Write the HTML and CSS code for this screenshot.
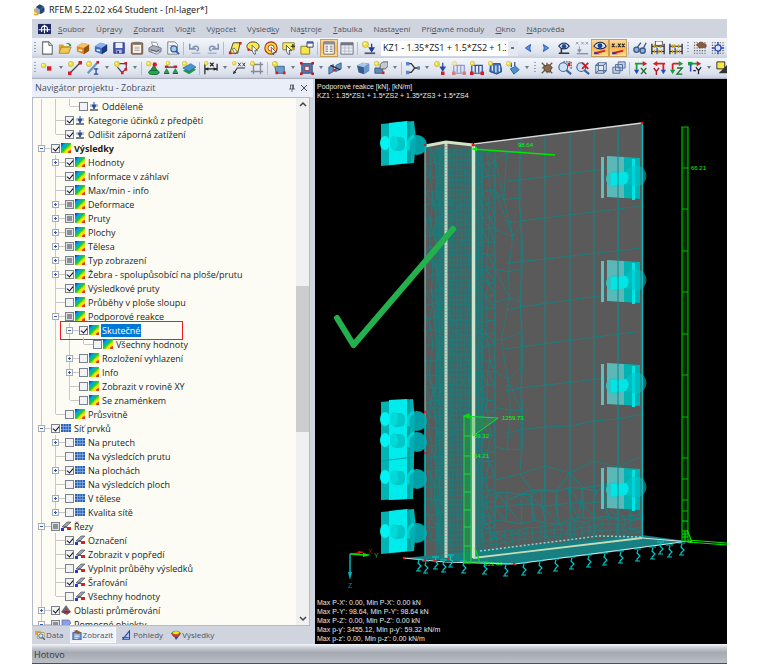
FILE: index.html
```html
<!DOCTYPE html>
<html lang="cs">
<head>
<meta charset="utf-8">
<title>RFEM 5.22.02 x64 Student - [nl-lager*]</title>
<link rel="stylesheet" href="styles.css">
</head>
<body>
<svg class="defs" aria-hidden="true">
  <defs>
    <linearGradient id="rainbow" x1="0" y1="0" x2="1" y2="1">
      <stop offset="0" stop-color="#0a2cc8"/><stop offset=".28" stop-color="#00a8e8"/><stop offset=".48" stop-color="#12c83c"/><stop offset=".68" stop-color="#f4e800"/><stop offset=".88" stop-color="#f02800"/>
    </linearGradient>
    <symbol id="bulb" viewBox="0 0 16 16"><circle cx="4.500" cy="4.500" r="4" fill="#f2e23c" stroke="#b09a1c" stroke-width=".7"/><circle cx="3.500" cy="3.500" r="1.400" fill="#fffbd0"/></symbol>
    <symbol id="i-app" viewBox="0 0 16 16"><circle cx="9.500" cy="8" r="6" fill="#5b86ba"/><path d="M4 5l5-4 5 3-5 4zM9 8l6-3v6l-6 3z" fill="#27466f"/><path d="M4 5l5 3v6L4 11z" fill="#8fb1d8"/><path d="M7 8H2.500v3H6v3.500H1" fill="none" stroke="#e0a818" stroke-width="2"/></symbol>
    <symbol id="i-frame" viewBox="0 0 18 16"><path d="M0 1h18v14H0z" fill="#1d2a66"/><path d="M1 9h16M9 2v12M5 6l4-3 4 3M5 6v6M13 6v6" stroke="#fff" stroke-width="1.500" fill="none"/></symbol>
    <symbol id="i-new" viewBox="0 0 16 16"><path d="M3 1h7l4 4v10H3z" fill="#fff" stroke="#666" stroke-width="1.200"/><path d="M10 1v4h4" fill="#ddd" stroke="#666"/></symbol>
    <symbol id="i-open" viewBox="0 0 16 16"><path d="M1 14V4h5l1 2h6v8z" fill="#d9a52c"/><path d="M1 14l3-7h11l-3 7z" fill="#f0c858" stroke="#9b7418" stroke-width=".8"/><path d="M9 3c2-2 4-1 5 1l1-1v3h-3l1-1c-1-2-2-2-4-2z" fill="#3c8f3c"/></symbol>
    <symbol id="i-boxo" viewBox="0 0 16 16"><path d="M1 6l6-4 8 2v7l-6 4-8-3z" fill="#d98a24"/><path d="M1 6l6-4 8 2-6 4z" fill="#f4c06a"/><path d="M9 8l6-4v7l-6 4z" fill="#8f5410"/><path d="M3 9l4 1v2l-4-1z" fill="#fff0c8"/></symbol>
    <symbol id="i-boxb" viewBox="0 0 16 16"><path d="M1 6l6-4 8 2v7l-6 4-8-3z" fill="#3d6fc0"/><path d="M1 6l6-4 8 2-6 4z" fill="#8bb2ec"/><path d="M9 8l6-4v7l-6 4z" fill="#1c3a7c"/><path d="M3 9l4 1v2l-4-1z" fill="#e0ecff"/></symbol>
    <symbol id="i-save" viewBox="0 0 16 16"><path d="M2 2h12v12H2z" fill="#4b57b4" stroke="#26307c"/><path d="M4 2h8v6H4z" fill="#eceffa"/><path d="M5 10h6v4H5z" fill="#b8c0e0"/><path d="M6 11h2v3H6z" fill="#26307c"/></symbol>
    <symbol id="i-clip" viewBox="0 0 16 16"><rect x="1.500" y="2" width="13" height="13" rx="1" fill="#a87e5c" stroke="#6c4c34"/><path d="M3.500 4.500h9v9h-9z" fill="#fff"/><path d="M5 7h6M5 9h6M5 11h6" stroke="#999"/><path d="M5 1h6v3H5z" fill="#777"/></symbol>
    <symbol id="i-print" viewBox="0 0 16 16"><path d="M4 1l6 1 2 5-6 1z" fill="#fff" stroke="#777" stroke-width=".8"/><path d="M1 8l5-3 9 3v4l-5 3-9-3z" fill="#a8afbc" stroke="#565d6c" stroke-width=".8"/><path d="M3 10l7 2 3-2" fill="none" stroke="#444"/><path d="M5 12l5 2 2-1" stroke="#fff" fill="none"/></symbol>
    <symbol id="i-prev" viewBox="0 0 16 16"><path d="M2 1h8l3 3v11H2z" fill="#f4f6fa" stroke="#777"/><path d="M4 5h5M4 8h3" stroke="#aaa"/><circle cx="9" cy="9" r="3.500" fill="#a8ccf0" stroke="#33629c" stroke-width="1.300"/><path d="M11.500 11.500L15 15" stroke="#33629c" stroke-width="2"/></symbol>
    <symbol id="i-undo" viewBox="0 0 16 16"><path d="M2 3v6h6L6 7c3-2 6-1 6 2 0 1-1 2-2 2.500" fill="none" stroke="#8093b2" stroke-width="1.800"/><path d="M4 14h10" stroke="#a4b0c4" stroke-width="1.500"/></symbol>
    <symbol id="i-redo" viewBox="0 0 16 16"><path d="M14 3v6H8l2-2C7 5 4 6 4 9c0 1 1 2 2 2.500" fill="none" stroke="#8093b2" stroke-width="1.800"/><path d="M2 14h10" stroke="#a4b0c4" stroke-width="1.500"/></symbol>
    <symbol id="i-para" viewBox="0 0 16 16"><path d="M6 2h8l-3 12H2z" fill="#f8ea58" stroke="#40381c"/><path d="M7 8l4 5-2 0-1 2-3-6z" fill="#fff" stroke="#222" stroke-width=".7"/><path d="M12.500 1h3v3h-3zM1 12h3v3H1z" fill="#d82020"/></symbol>
    <symbol id="i-lasso" viewBox="0 0 16 16"><ellipse cx="8" cy="6" rx="7" ry="5" fill="#f8ea58" stroke="#40381c"/><path d="M7 5l6 6-3 0 1 4-2 0-2-4z" fill="#fff" stroke="#222" stroke-width=".7"/><circle cx="3" cy="10" r="1.500" fill="#d82020"/></symbol>
    <symbol id="i-target" viewBox="0 0 16 16"><circle cx="8" cy="8" r="7" fill="#f6dc38" stroke="#a83418" stroke-width="1.300"/><circle cx="8" cy="8" r="3.500" fill="#fff" stroke="#d82020"/><path d="M8 7l6 6-3 0 0 3-2-3z" fill="#fff" stroke="#222" stroke-width=".7"/></symbol>
    <symbol id="i-selplus" viewBox="0 0 16 16"><path d="M1 2h13v8H1z" fill="#f8ee70" stroke="#8a7c28"/><path d="M10 6h5M12.500 3.500v5" stroke="#222" stroke-width="1.300"/><path d="M5 5l6 6-3 0 1 4-2 0-2-3z" fill="#fff" stroke="#222" stroke-width=".8"/></symbol>
    <symbol id="i-selwin" viewBox="0 0 16 16"><path d="M1 6h10v9H1z" fill="#f6e64c" stroke="#8a7c28"/><path d="M8 1h7v6H8z" fill="#fff" stroke="#334"/><path d="M8 1h7v2H8z" fill="#3c60b0"/></symbol>
    <symbol id="i-sheet" viewBox="0 0 16 16"><path d="M2 1h12v14H2z" fill="#f8f8f8" stroke="#666"/><path d="M2 1h12v3H2z" fill="#8c8c94"/><path d="M4 6h3M9 6h3M4 8h3M9 8h3M4 10h3M9 10h3M4 12h3M9 12h3" stroke="#888" stroke-width="1.200"/></symbol>
    <symbol id="i-table" viewBox="0 0 16 16"><path d="M1 2h14v13H1z" fill="#eef0f4" stroke="#667"/><path d="M1 2h14v3H1z" fill="#707888"/><path d="M5.500 5v10M10 5v10M1 8h14M1 11.500h14" stroke="#b4bac6"/></symbol>
    <symbol id="i-load" viewBox="0 0 16 16"><use href="#bulb" width="14" height="14"/><path d="M3 14h12" stroke="#556" stroke-width="2"/><path d="M11 3v7M8.500 8l2.500 4 2.500-4z" stroke="#2040a0" fill="#2040a0" stroke-width="1.500"/></symbol>
    <symbol id="i-left" viewBox="0 0 16 16"><path d="M11 4L5 8l6 4-1-4z" fill="#5a96e8" stroke="#2050b0"/></symbol>
    <symbol id="i-right" viewBox="0 0 16 16"><path d="M5 4l6 4-6 4 1-4z" fill="#5a96e8" stroke="#2050b0"/></symbol>
    <symbol id="i-eye" viewBox="0 0 16 16"><path d="M2 6c3-5 9-5 12 0-3 4-9 4-12 0z" fill="#dbe8f8" stroke="#182c58" stroke-width="1.300"/><circle cx="8" cy="6" r="2.600" fill="#234c98"/><path d="M5 8v6M2 14h12" stroke="#334" stroke-width="1.800"/></symbol>
    <symbol id="i-xload" viewBox="0 0 16 16"><path d="M1 1l3 3M4 1L1 4M7 1l3 3M10 1L7 4M12 1l3 3M15 1l-3 3" stroke="#8c94a4"/><path d="M5 6v5M3 10l2 3 2-3z" stroke="#8c94a4" fill="#8c94a4"/><path d="M2 14.500h13" stroke="#8c94a4" stroke-width="1.600"/></symbol>
    <symbol id="i-eyer" viewBox="0 0 16 16"><path d="M1 6c4-6 11-6 14 0-3 4-10 4-14 0z" fill="#dbe8f8" stroke="#182c58" stroke-width="1.200"/><circle cx="8" cy="5.500" r="2.800" fill="#1c428c"/><path d="M2 14l12-3" stroke="#e02020" stroke-width="2.200"/><path d="M1 15h7l-6-3z" fill="#2038d0"/></symbol>
    <symbol id="i-xr" viewBox="0 0 16 16"><path d="M1 3l3 4M4 3L1 7M8 3l3 4M11 3L8 7M12.500 3l3 4M15.500 3l-3 4M6 6v1" stroke="#222" stroke-width="1.200"/><path d="M2 14l12-3" stroke="#e02020" stroke-width="2.200"/><path d="M1 15h7l-6-3z" fill="#2038d0"/></symbol>
    <symbol id="i-glass" viewBox="0 0 16 16"><circle cx="4" cy="10" r="3" fill="#8eaedc" stroke="#3c5888" stroke-width="1.500"/><circle cx="11" cy="11" r="3" fill="#8eaedc" stroke="#3c5888" stroke-width="1.500"/><path d="M5 7l4-5M12 8l3-6" stroke="#3c5888" stroke-width="1.500"/></symbol>
    <symbol id="i-abac" viewBox="0 0 16 16"><path d="M1 3v12M15 3v12M1 6h14M1 12h14" stroke="#223" stroke-width="1.400"/><path d="M4 4v4M6.500 4v4M11 4v4M4 10v4M9 10v4M12 10v4" stroke="#c8a020" stroke-width="1.800"/><path d="M7 8v7" stroke="#3058b8" stroke-width="1.500"/></symbol>
    <symbol id="i-abac2" viewBox="0 0 16 16"><use href="#i-abac" width="16" height="16"/><path d="M5 0h8v5H5z" fill="#fff" stroke="#445"/></symbol>
    <symbol id="i-grid" viewBox="0 0 16 16"><path d="M1 2h14M1 5h14M1 8h14M1 11h14M1 14h14" stroke="#666" stroke-width="1.200" stroke-dasharray="1.500 1.500"/></symbol>
    <symbol id="i-hand" viewBox="0 0 16 16"><use href="#i-grid" width="16" height="16"/><path d="M4 4l5-3 6 3v3l-8 1z" fill="#8c5c3c" stroke="#4c3020" stroke-width=".6"/></symbol>
    <symbol id="i-snap" viewBox="0 0 16 16"><use href="#i-grid" width="16" height="16"/><path d="M8 1v14M1 8h14" stroke="#2848b8" stroke-width="1.500"/><circle cx="8" cy="8" r="3.500" fill="#dce8ff" stroke="#2848b8" stroke-width="1.400"/></symbol>
    <symbol id="i-node" viewBox="0 0 16 16"><use href="#bulb" x="1" y="2" width="11" height="11"/><path d="M8 6h5v5H8z" fill="#d81c24"/></symbol>
    <symbol id="i-line" viewBox="0 0 16 16"><path d="M2 14L14 2" stroke="#444" stroke-width="1.500"/><path d="M0 12h4v4H0zM12 0h4v4h-4z" fill="#d81c24"/><use href="#bulb" width="12" height="12"/></symbol>
    <symbol id="i-beam" viewBox="0 0 16 16"><path d="M2 14L13 2" stroke="#6a94c0" stroke-width="2.500"/><path d="M12 0h3v3h-3z" fill="#d81c24"/><use href="#bulb" width="12" height="12"/><path d="M9 9h5M11.500 9v6M9 15h5" stroke="#2848a0" stroke-width="1.500"/></symbol>
    <symbol id="i-poly" viewBox="0 0 16 16"><path d="M4 3h10v6l-5 4-5-6" fill="none" stroke="#446" stroke-width="1.400"/><path d="M12 1h3v3h-3zM12 8h3v3h-3zM8 12h3v3H8z" fill="#d81c24"/><use href="#bulb" width="12" height="12"/></symbol>
    <symbol id="i-supp" viewBox="0 0 16 16"><path d="M9 5l4 6H5z" fill="#1c9c48" stroke="#0c6428"/><ellipse cx="9" cy="13" rx="6" ry="2.500" fill="#26a854" stroke="#0c6428"/><circle cx="10" cy="4" r="2.500" fill="#d81c24"/><use href="#bulb" width="11" height="11"/></symbol>
    <symbol id="i-supl" viewBox="0 0 16 16"><path d="M2 7h12" stroke="#444" stroke-width="1.500"/><path d="M3 8l3 5H0zM13 8l3 5h-6z" fill="#1c9c48"/><path d="M0 14h6M10 14h6" stroke="#0c6428" stroke-width="1.500"/><path d="M1 5h4v3H1zM11 5h4v3h-4z" fill="#d81c24"/><use href="#bulb" x="2" width="9" height="9"/></symbol>
    <symbol id="i-sups" viewBox="0 0 16 16"><path d="M1 11l9-5 6 4-8 5z" fill="#1c9c48"/><path d="M1 8l9-5 6 4-8 5z" fill="#4c94d0" stroke="#245c94" stroke-width=".7"/><use href="#bulb" width="11" height="11"/></symbol>
    <symbol id="i-dim" viewBox="0 0 16 16"><path d="M1 3v12M15 3v8M1 9h14" stroke="#222" stroke-width="1.400"/><path d="M1 9l4-2v4zM15 9l-4-2v4z" fill="#222"/><path d="M7 2l4 4M11 2L7 6" stroke="#222" stroke-width="1.300"/><use href="#bulb" width="9" height="9"/></symbol>
    <symbol id="i-dimx" viewBox="0 0 16 16"><path d="M2 14l4-6h9" fill="none" stroke="#333" stroke-width="1.300"/><path d="M7 2l3 4M10 2L7 6M12 2l3 4M15 2l-3 4" stroke="#333"/><path d="M1 15l1-4 3 2z" fill="#333"/><use href="#bulb" width="9" height="9"/></symbol>
    <symbol id="i-axes" viewBox="0 0 16 16"><path d="M4 1v14M12 1v14M1 4h14M1 12h14" stroke="#889" stroke-width="1.500"/><use href="#bulb" width="10" height="10"/></symbol>
    <symbol id="i-surf" viewBox="0 0 16 16"><path d="M3 6h11v8H5z" fill="#6c9cc8" stroke="#38618c"/><path d="M12.500 12h3v3h-3zM4 12h3v3H4z" fill="#d81c24"/><use href="#bulb" width="12" height="12"/></symbol>
    <symbol id="i-hole" viewBox="0 0 16 16"><path d="M2 3h12v11H2z" fill="#4c7cb0" stroke="#28507c"/><path d="M5.500 6h5v5h-5z" fill="#f0f4fa" stroke="#a02830"/><path d="M0 1h3v3H0zM13 1h3v3h-3zM0 13h3v3H0zM13 13h3v3h-3z" fill="#c81c24"/></symbol>
    <symbol id="i-rib" viewBox="0 0 16 16"><path d="M1 7l5-3v8l-5 3zM9 5l6-3v7l-6 3z" fill="#6494c8" stroke="#38618c"/><path d="M3 5l11 5" stroke="#223" stroke-width="1.300"/><path d="M6 9h3v3H6z" fill="#d81c24"/></symbol>
    <symbol id="i-solid" viewBox="0 0 16 16"><path d="M1 5l7-3 7 1v8l-6 4-6-2z" fill="#385c90"/><path d="M1 5l7-3 7 1-6 4z" fill="#a8c8ec"/><path d="M9 7l6-4v8l-6 4z" fill="#6c98cc"/></symbol>
    <symbol id="i-bodies" viewBox="0 0 16 16"><path d="M1 8h9v6H1z" fill="#5c8cbc" stroke="#305478"/><path d="M7 4l3-3h6v5l-3 3H7z" fill="#c4cad4" stroke="#555"/><path d="M9 12h3v3H9z" fill="#d81c24"/><use href="#bulb" width="11" height="11"/></symbol>
    <symbol id="i-branch" viewBox="0 0 16 16"><path d="M2 3h4l4 5-4 5H2M10 8h4" fill="none" stroke="#333" stroke-width="1.500"/><path d="M0 1h4v4H0zM0 11h4v4H0zM13 6h3v4h-3z" fill="#5888c8"/></symbol>
    <symbol id="i-nload" viewBox="0 0 16 16"><path d="M10 2v6M7.500 7l2.500 4 2.500-4z" stroke="#2848a8" fill="#2848a8" stroke-width="1.500"/><path d="M8 12h4v4H8z" fill="#d81c24"/><use href="#bulb" width="12" height="12"/></symbol>
    <symbol id="i-lload" viewBox="0 0 16 16"><path d="M2 5h12v8M2 5v8M6 5v8M10 5v8M1 14h14" fill="none" stroke="#3050a0" stroke-width="1.400"/><path d="M0 12h4v4H0zM12 12h4v4h-4z" fill="#d81c24"/><use href="#bulb" width="10" height="10"/></symbol>
    <symbol id="i-sload" viewBox="0 0 16 16"><path d="M3 3h11l2 9-6 3-8-3z" fill="#4474b4" stroke="#1c3c74"/><path d="M5 5v6M9 5v8M13 5v7" stroke="#dce8ff" stroke-width="1.500"/><use href="#bulb" width="10" height="10"/></symbol>
    <symbol id="i-fload" viewBox="0 0 16 16"><path d="M5 9l6-3 4 4-6 5z" fill="#4c90d4" stroke="#245c94"/><path d="M6 2v5M10 1v5" stroke="#3858a8" stroke-width="1.500"/><use href="#bulb" width="11" height="11"/></symbol>
    <symbol id="i-move" viewBox="0 0 16 16"><path d="M2 2l12 12M14 2L2 14M2 8h12M8 2v12" stroke="#554" stroke-width="1.400"/><path d="M4 6l6-2 4 3-3 6-6-2z" fill="#8c6848" stroke="#40301c" stroke-width=".7"/></symbol>
    <symbol id="i-zoom" viewBox="0 0 16 16"><path d="M6 1h9v9" fill="none" stroke="#223" stroke-dasharray="2 1"/><circle cx="6" cy="7" r="5" fill="#cfe2f8" stroke="#3864a8" stroke-width="1.300"/><path d="M9.500 10.500L15 15" stroke="#3864a8" stroke-width="2.400"/><path d="M11 2h3v4h-3z" fill="#d81c24"/></symbol>
    <symbol id="i-zoomx" viewBox="0 0 16 16"><circle cx="6" cy="7" r="5" fill="#cfe2f8" stroke="#3864a8" stroke-width="1.300"/><path d="M9.500 10.500L15 15" stroke="#3864a8" stroke-width="2.400"/><path d="M7 2l7 7M14 2L7 9" stroke="#c81820" stroke-width="2"/></symbol>
    <symbol id="i-cube" viewBox="0 0 16 16"><path d="M2 5h9v9H2zM5 2h9v9H5zM2 5l3-3M11 5l3-3M11 14l3-3M2 14l3-3" fill="none" stroke="#54709c" stroke-width="1.200"/></symbol>
    <symbol id="i-cubes" viewBox="0 0 16 16"><path d="M7 1h8v7H7zM4 4h8v7H4zM1 7h8v7H1z" fill="#c4d0e4" stroke="#54709c" stroke-width="1.100"/></symbol>
    <symbol id="i-vx" viewBox="0 0 16 16"><path d="M1 3h10" stroke="#18a038" stroke-width="2"/><path d="M10 0l5 3-5 3z" fill="#d81c24"/><path d="M3 3v8" stroke="#18a038" stroke-width="2"/><path d="M0 10h6l-3 5z" fill="#2848c8"/><path d="M8 8l6 7M14 8l-6 7" stroke="#18702c" stroke-width="1.500"/></symbol>
    <symbol id="i-vy" viewBox="0 0 16 16"><path d="M5 3h10M13 3v8" stroke="#d81c24" stroke-width="2"/><path d="M6 0L1 3l5 3z" fill="#d81c24"/><path d="M10 10h6l-3 5z" fill="#2848c8"/><path d="M2 8l3 4 3-4M5 12v4" fill="none" stroke="#a81c24" stroke-width="1.500"/></symbol>
    <symbol id="i-vz" viewBox="0 0 16 16"><path d="M3 3h9M3 3v8" stroke="#d81c24" stroke-width="2"/><path d="M10 0l5 3-5 3zM0 10h6l-3 5z" fill="#18a038"/><path d="M8 8h6l-6 7h6" fill="none" stroke="#18702c" stroke-width="1.500"/></symbol>
    <symbol id="i-vmy" viewBox="0 0 16 16"><path d="M2 3h10" stroke="#18a038" stroke-width="2"/><path d="M0 1h5v4H0z" fill="#18a038"/><path d="M10 0l5 3-5 3z" fill="#d81c24"/><path d="M3 4v8" stroke="#2848c8" stroke-width="1.800"/><path d="M6 11h3M9 7l3 4 3-4M12 11v4" fill="none" stroke="#223" stroke-width="1.400"/></symbol>
    <symbol id="i-shade" viewBox="0 0 16 16"><path d="M1 1h9v8H1z" fill="#f8ea40" stroke="#222"/><path d="M3 14L14 3v11z" fill="#333"/></symbol>
    <symbol id="t-load" viewBox="0 0 10 10"><path d="M1 9h8" stroke="#556" stroke-width="1.500"/><path d="M5 1v4M3 4h4L5 8z" stroke="#2c4a94" fill="#2c4a94"/><path d="M2 3v3M8 3v3" stroke="#7c90c0"/></symbol>
    <symbol id="t-res" viewBox="0 0 10 10"><path d="M0 0h10v10H0z" fill="url(#rainbow)"/><path d="M4 10c0-3 2-5 6-6v6z" fill="#f4e400"/><path d="M7 10c0-2 1-2.500 3-3v3z" fill="#e83000"/></symbol>
    <symbol id="t-mesh" viewBox="0 0 10 10"><path d="M0 1h10v8H0z" fill="#2c62b0"/><path d="M0 3.500h10M0 6.500h10M2.500 1v8M5 1v8M7.500 1v8" stroke="#8cb4e8" stroke-width=".7"/></symbol>
    <symbol id="t-cut" viewBox="0 0 10 10"><path d="M1 6l5-5h4L5 6z" fill="#98a4b4" stroke="#445" stroke-width=".6"/><path d="M0 9l4-3 6 1" fill="none" stroke="#334"/><path d="M6 6h4v3H6z" fill="#d82028"/><path d="M0 7h3v3H0z" fill="#2438d0"/></symbol>
    <symbol id="t-avg" viewBox="0 0 10 10"><path d="M5 0l5 7-4 3-6-3z" fill="#68707c"/><path d="M5 3l3 5-5 1z" fill="#c83038"/><path d="M1 7h8" stroke="#223" stroke-width=".7"/></symbol>
    <symbol id="t-aux" viewBox="0 0 10 10"><path d="M1 1h7l2 3-4 4-5-2z" fill="#8ca0e4" stroke="#5468b8" stroke-width=".7"/></symbol>
    <symbol id="b-data" viewBox="0 0 12 12"><path d="M0 1h7v5H0z" fill="#e8a830"/><path d="M3 3h8v7H3z" fill="#f8f0d0" stroke="#a08040" stroke-width=".8"/><circle cx="7" cy="7" r="2.500" fill="#cfe2f8" stroke="#3864a8"/><path d="M9 9l3 3" stroke="#3864a8" stroke-width="1.500"/></symbol>
    <symbol id="b-show" viewBox="0 0 12 12"><path d="M1 3h10v9H1z" fill="#6c94d8" stroke="#345aa0"/><path d="M3 6h6M3 8h6M3 10h4" stroke="#fff"/><path d="M2 1l4-1 5 3-4 2z" fill="#8c5c3c"/></symbol>
    <symbol id="b-view" viewBox="0 0 12 12"><path d="M1 11L9 1v10z" fill="#b8ccf0" stroke="#2848a8" stroke-width="1.300"/><path d="M0 9h8" stroke="#2848a8"/></symbol>
    <symbol id="b-res" viewBox="0 0 12 12"><path d="M0 4c3-4 9-4 12 0L9 8H3z" fill="#18a838"/><path d="M2 3c2-2 6-2 8 0L8 6H4z" fill="#f0e020"/><path d="M0 4l3 4h6l3-4-3 1H3z" fill="#e03020"/><path d="M4 8h5l-3 4z" fill="#2040c0"/></symbol>
  </defs>
</svg>

<div class="app">
  <header class="titlebar"><svg class="title-icon"><use href="#i-app"/></svg><h1>RFEM 5.22.02 x64 Student - [nl-lager*]</h1></header>

  <nav class="menubar">
    <svg class="menu-icon"><use href="#i-frame"/></svg>
    <a href="#"><u>S</u>oubor</a><a href="#">Úpr<u>a</u>vy</a><a href="#"><u>Z</u>obrazit</a><a href="#">Vlo<u>ž</u>it</a><a href="#">Vý<u>p</u>očet</a><a href="#">Výsled<u>k</u>y</a><a href="#">Ná<u>s</u>troje</a><a href="#"><u>T</u>abulka</a><a href="#">Nasta<u>v</u>ení</a><a href="#">Pří<u>d</u>avné moduly</a><a href="#"><u>O</u>kno</a><a href="#"><u>N</u>ápověda</a>
  </nav>

  <div class="toolbar" role="toolbar" aria-label="Standardní">
    <button aria-label="Nový"><svg><use href="#i-new"/></svg></button><button aria-label="Otevřít"><svg><use href="#i-open"/></svg></button><button aria-label="Projekt"><svg><use href="#i-boxo"/></svg></button><button aria-label="Blok"><svg><use href="#i-boxb"/></svg></button><button aria-label="Uložit"><svg><use href="#i-save"/></svg></button><button aria-label="Protokol"><svg><use href="#i-clip"/></svg></button><button aria-label="Tisk"><svg><use href="#i-print"/></svg></button><button aria-label="Náhled"><svg><use href="#i-prev"/></svg></button><i class="sep"></i>
    <button aria-label="Zpět"><svg><use href="#i-undo"/></svg></button><button aria-label="Znovu"><svg><use href="#i-redo"/></svg></button><i class="sep"></i>
    <button aria-label="Výběr rovnoběžníkem"><svg><use href="#i-para"/></svg></button><button aria-label="Výběr elipsou"><svg><use href="#i-lasso"/></svg></button><button aria-label="Výběr kruhem"><svg><use href="#i-target"/></svg></button><button aria-label="Přidat k výběru"><svg><use href="#i-selplus"/></svg></button><button aria-label="Výběr oknem"><svg><use href="#i-selwin"/></svg></button><i class="sep"></i>
    <button class="on" aria-label="Navigátor"><svg><use href="#i-sheet"/></svg></button><button aria-label="Tabulky"><svg><use href="#i-table"/></svg></button><i class="sep"></i>
    <button aria-label="Nový zatěžovací stav"><svg><use href="#i-load"/></svg></button>
    <select class="combo" aria-label="Zatěžovací stav"><option>KZ1 - 1.35*ZS1 + 1.5*ZS2 + 1.35*ZS3 + 1.5*ZS4</option></select>
    <button aria-label="Předchozí"><svg><use href="#i-left"/></svg></button><button aria-label="Další"><svg><use href="#i-right"/></svg></button><button aria-label="Zobrazit zatížení"><svg><use href="#i-eye"/></svg></button><button aria-label="Hodnoty zatížení"><svg><use href="#i-xload"/></svg></button><button class="on" aria-label="Zobrazit výsledky"><svg><use href="#i-eyer"/></svg></button><button class="on" aria-label="Hodnoty výsledků"><svg><use href="#i-xr"/></svg></button><i class="sep"></i>
    <button aria-label="Brýle"><svg><use href="#i-glass"/></svg></button><button aria-label="Výpočet"><svg><use href="#i-abac2"/></svg></button><button aria-label="Spočítat vše"><svg><use href="#i-abac"/></svg></button><i class="grip"></i>
    <button aria-label="Pracovní rovina"><svg><use href="#i-hand"/></svg></button><button aria-label="Rastr"><svg><use href="#i-snap"/></svg></button>
  </div>

  <div class="toolbar" role="toolbar" aria-label="Vložit">
    <button aria-label="Uzel"><svg><use href="#i-node"/></svg></button><button class="dd" aria-label="Typy uzlu"></button>
    <button aria-label="Linie"><svg><use href="#i-line"/></svg></button><button aria-label="Prut"><svg><use href="#i-beam"/></svg></button><button class="dd" aria-label="Typy prutu"></button>
    <button aria-label="Polylinie"><svg><use href="#i-poly"/></svg></button><button class="dd" aria-label="Typy linie"></button><i class="sep"></i>
    <button aria-label="Uzlová podpora"><svg><use href="#i-supp"/></svg></button><button aria-label="Liniová podpora"><svg><use href="#i-supl"/></svg></button><button aria-label="Plošná podpora"><svg><use href="#i-sups"/></svg></button><i class="sep"></i>
    <button aria-label="Kóta"><svg><use href="#i-dim"/></svg></button><button class="dd" aria-label="Typy kót"></button><button aria-label="Poznámka"><svg><use href="#i-dimx"/></svg></button><button aria-label="Osnova"><svg><use href="#i-axes"/></svg></button><i class="sep"></i>
    <button aria-label="Plocha"><svg><use href="#i-surf"/></svg></button><button class="dd" aria-label="Typy ploch"></button><button aria-label="Otvor"><svg><use href="#i-hole"/></svg></button><button class="dd" aria-label="Typy otvorů"></button><button aria-label="Žebro"><svg><use href="#i-rib"/></svg></button><button class="dd" aria-label="Typy žeber"></button><button aria-label="Těleso"><svg><use href="#i-solid"/></svg></button><button aria-label="Skupina"><svg><use href="#i-bodies"/></svg></button><button class="dd" aria-label="Typy těles"></button><i class="sep"></i>
    <button aria-label="Spojení"><svg><use href="#i-branch"/></svg></button><button class="dd" aria-label="Typy spojení"></button><button aria-label="Uzlové zatížení"><svg><use href="#i-nload"/></svg></button><button class="dim" aria-label="Zatížení prutu"><svg><use href="#i-lload"/></svg></button><button aria-label="Liniové zatížení"><svg><use href="#i-lload"/></svg></button><button aria-label="Plošné zatížení"><svg><use href="#i-sload"/></svg></button><button aria-label="Volné zatížení"><svg><use href="#i-fload"/></svg></button><button class="dd" aria-label="Typy zatížení"></button><i class="grip"></i>
    <button aria-label="Posun"><svg><use href="#i-move"/></svg></button><button aria-label="Zvětšit okno"><svg><use href="#i-zoom"/></svg></button><button aria-label="Zobrazit vše"><svg><use href="#i-zoomx"/></svg></button><button aria-label="Izometrie"><svg><use href="#i-cube"/></svg></button><button aria-label="Perspektiva"><svg><use href="#i-cubes"/></svg></button><i class="sep"></i>
    <button aria-label="Pohled X"><svg><use href="#i-vx"/></svg></button><button aria-label="Pohled Y"><svg><use href="#i-vy"/></svg></button><button aria-label="Pohled Z"><svg><use href="#i-vz"/></svg></button><button aria-label="Pohled -Y"><svg><use href="#i-vmy"/></svg></button><button class="dd" aria-label="Pohledy"></button><button aria-label="Vykreslení"><svg><use href="#i-shade"/></svg></button>
  </div>

  <main class="work">
    <aside class="navigator">
      <div class="nav-head"><h2>Navigátor projektu - Zobrazit</h2>
        <button aria-label="Připnout"><svg viewBox="0 0 8 8"><path d="M2 1h4M2.500 1v4M5.500 1v4M4.500 1v4M1 5h6M4 5v3" stroke="currentColor" stroke-width=".8" fill="none"/></svg></button>
        <button aria-label="Zavřít"><svg viewBox="0 0 8 8"><path d="M1 1l6 6M7 1L1 7" stroke="currentColor"/></svg></button>
      </div>
      <div class="tree-wrap">
        <div class="tree">
          <ul>
            <li><ul>
              <li><ul>
                <li><div class="row"><span class="slot"></span><input type="checkbox" id="c1"><svg><use href="#t-load"/></svg><label for="c1">Odděleně</label></div></li>
              </ul></li>
              <li><div class="row"><span class="slot"></span><input type="checkbox" id="c2" checked><svg><use href="#t-load"/></svg><label for="c2">Kategorie účinků z předpětí</label></div></li>
              <li><div class="row"><span class="slot"></span><input type="checkbox" id="c3" checked><svg><use href="#t-load"/></svg><label for="c3">Odlišit záporná zatížení</label></div></li>
            </ul></li>
            <li><div class="row"><button class="slot minus" aria-label="Sbalit"></button><input type="checkbox" id="c4" checked><svg><use href="#t-res"/></svg><label class="strong" for="c4">Výsledky</label></div>
            <ul>
              <li><div class="row"><button class="slot plus" aria-label="Rozbalit"></button><input type="checkbox" id="c5" checked><svg><use href="#t-res"/></svg><label for="c5">Hodnoty</label></div></li>
              <li><div class="row"><span class="slot"></span><input type="checkbox" id="c6" checked><svg><use href="#t-res"/></svg><label for="c6">Informace v záhlaví</label></div></li>
              <li><div class="row"><span class="slot"></span><input type="checkbox" id="c7" checked><svg><use href="#t-res"/></svg><label for="c7">Max/min - info</label></div></li>
              <li><div class="row"><button class="slot plus" aria-label="Rozbalit"></button><input type="checkbox" id="c8" class="mixed"><svg><use href="#t-res"/></svg><label for="c8">Deformace</label></div></li>
              <li><div class="row"><button class="slot plus" aria-label="Rozbalit"></button><input type="checkbox" id="c9" class="mixed"><svg><use href="#t-res"/></svg><label for="c9">Pruty</label></div></li>
              <li><div class="row"><button class="slot plus" aria-label="Rozbalit"></button><input type="checkbox" id="c10" class="mixed"><svg><use href="#t-res"/></svg><label for="c10">Plochy</label></div></li>
              <li><div class="row"><button class="slot plus" aria-label="Rozbalit"></button><input type="checkbox" id="c11" class="mixed"><svg><use href="#t-res"/></svg><label for="c11">Tělesa</label></div></li>
              <li><div class="row"><button class="slot plus" aria-label="Rozbalit"></button><input type="checkbox" id="c12" class="mixed"><svg><use href="#t-res"/></svg><label for="c12">Typ zobrazení</label></div></li>
              <li><div class="row"><button class="slot plus" aria-label="Rozbalit"></button><input type="checkbox" id="c13" checked><svg><use href="#t-res"/></svg><label for="c13">Žebra - spolupůsobící na ploše/prutu</label></div></li>
              <li><div class="row"><span class="slot"></span><input type="checkbox" id="c14" checked><svg><use href="#t-res"/></svg><label for="c14">Výsledkové pruty</label></div></li>
              <li><div class="row"><span class="slot"></span><input type="checkbox" id="c15"><svg><use href="#t-res"/></svg><label for="c15">Průběhy v ploše sloupu</label></div></li>
              <li><div class="row"><button class="slot minus" aria-label="Sbalit"></button><input type="checkbox" id="c16" class="mixed"><svg><use href="#t-res"/></svg><label for="c16">Podporové reakce</label></div>
              <ul>
                <li><div class="row marked"><button class="slot minus" aria-label="Sbalit"></button><input type="checkbox" id="c17" checked><svg><use href="#t-res"/></svg><label class="selected" for="c17">Skutečné</label></div>
                <ul>
                  <li><div class="row"><span class="slot"></span><input type="checkbox" id="c18"><svg><use href="#t-res"/></svg><label for="c18">Všechny hodnoty</label></div></li>
                </ul></li>
                <li><div class="row"><button class="slot plus" aria-label="Rozbalit"></button><input type="checkbox" id="c19"><svg><use href="#t-res"/></svg><label for="c19">Rozložení vyhlazení</label></div></li>
                <li><div class="row"><button class="slot plus" aria-label="Rozbalit"></button><input type="checkbox" id="c20"><svg><use href="#t-res"/></svg><label for="c20">Info</label></div></li>
                <li><div class="row"><span class="slot"></span><input type="checkbox" id="c21"><svg><use href="#t-res"/></svg><label for="c21">Zobrazit v rovině XY</label></div></li>
                <li><div class="row"><span class="slot"></span><input type="checkbox" id="c22"><svg><use href="#t-res"/></svg><label for="c22">Se znaménkem</label></div></li>
              </ul></li>
              <li><div class="row"><span class="slot"></span><input type="checkbox" id="c23"><svg><use href="#t-res"/></svg><label for="c23">Průsvitně</label></div></li>
            </ul></li>
            <li><div class="row"><button class="slot minus" aria-label="Sbalit"></button><input type="checkbox" id="c24" checked><svg><use href="#t-mesh"/></svg><label for="c24">Síť prvků</label></div>
            <ul>
              <li><div class="row"><button class="slot plus" aria-label="Rozbalit"></button><input type="checkbox" id="c25"><svg><use href="#t-mesh"/></svg><label for="c25">Na prutech</label></div></li>
              <li><div class="row"><span class="slot"></span><input type="checkbox" id="c26"><svg><use href="#t-mesh"/></svg><label for="c26">Na výsledcích prutu</label></div></li>
              <li><div class="row"><button class="slot plus" aria-label="Rozbalit"></button><input type="checkbox" id="c27" checked><svg><use href="#t-mesh"/></svg><label for="c27">Na plochách</label></div></li>
              <li><div class="row"><span class="slot"></span><input type="checkbox" id="c28"><svg><use href="#t-mesh"/></svg><label for="c28">Na výsledcích ploch</label></div></li>
              <li><div class="row"><button class="slot plus" aria-label="Rozbalit"></button><input type="checkbox" id="c29"><svg><use href="#t-mesh"/></svg><label for="c29">V tělese</label></div></li>
              <li><div class="row"><button class="slot plus" aria-label="Rozbalit"></button><input type="checkbox" id="c30"><svg><use href="#t-mesh"/></svg><label for="c30">Kvalita sítě</label></div></li>
            </ul></li>
            <li><div class="row"><button class="slot minus" aria-label="Sbalit"></button><input type="checkbox" id="c31" class="mixed"><svg><use href="#t-cut"/></svg><label for="c31">Řezy</label></div>
            <ul>
              <li><div class="row"><span class="slot"></span><input type="checkbox" id="c32" checked><svg><use href="#t-cut"/></svg><label for="c32">Označení</label></div></li>
              <li><div class="row"><span class="slot"></span><input type="checkbox" id="c33" checked><svg><use href="#t-cut"/></svg><label for="c33">Zobrazit v popředí</label></div></li>
              <li><div class="row"><span class="slot"></span><input type="checkbox" id="c34"><svg><use href="#t-cut"/></svg><label for="c34">Vyplnit průběhy výsledků</label></div></li>
              <li><div class="row"><span class="slot"></span><input type="checkbox" id="c35" checked><svg><use href="#t-cut"/></svg><label for="c35">Šrafování</label></div></li>
              <li><div class="row"><span class="slot"></span><input type="checkbox" id="c36"><svg><use href="#t-cut"/></svg><label for="c36">Všechny hodnoty</label></div></li>
            </ul></li>
            <li><div class="row"><button class="slot plus" aria-label="Rozbalit"></button><input type="checkbox" id="c37" checked><svg><use href="#t-avg"/></svg><label for="c37">Oblasti průměrování</label></div></li>
            <li><div class="row"><button class="slot minus" aria-label="Sbalit"></button><input type="checkbox" id="c38" class="mixed"><svg><use href="#t-aux"/></svg><label for="c38">Pomocné objekty</label></div></li>
          </ul>
        </div>
        <div class="scroll">
          <svg viewBox="0 0 13 13"><path d="M4 8l3-3 3 3" fill="none" stroke="#444" stroke-width="1.500"/></svg>
          <div class="track"><div class="thumb"></div></div>
          <svg viewBox="0 0 13 13"><path d="M4 5l3 3 3-3" fill="none" stroke="#444" stroke-width="1.500"/></svg>
        </div>
      </div>
      <nav class="tabs"><a href="#"><svg><use href="#b-data"/></svg>Data</a><a href="#" class="current"><svg><use href="#b-show"/></svg>Zobrazit</a><a href="#"><svg><use href="#b-view"/></svg>Pohledy</a><a href="#"><svg><use href="#b-res"/></svg>Výsledky</a></nav>
    </aside>

    <section class="view">
      <svg class="scene" id="scene" viewBox="315 79 412 565" preserveAspectRatio="xMinYMin meet" role="img" aria-label="Model stěny s podporovými reakcemi">
        <defs>
          <g id="blockL"><path d="M0 3L33 0l2 18-2 24L0 45z" fill="#00b4b4"/><path d="M8 2l18-2v42L8 44z" fill="#00ebeb"/><path d="M26 0l3 1 1 40-4 1z" fill="#00a0a0"/></g>
          <g id="knob"><ellipse cx="5" cy="0" rx="5" ry="7" fill="#00f4f4"/><rect x="11" y="-6" width="14" height="14" rx="5" fill="#00c8c8"/><ellipse cx="14" cy="0" rx="4" ry="7" fill="#00d8d8"/><circle cx="37" cy="2" r="10" fill="#00aeb4" fill-opacity=".92"/><path d="M29 7a10 10 0 0 1 5-14" fill="none" stroke="#00e8e8" stroke-width="3" stroke-opacity=".6"/></g>
          <g id="blockR"><path d="M0 1h3v41H0z" fill="#5cc0c0"/><path d="M6 0l17 1v41L6 41z" fill="#5ab8b8"/><path d="M23 1l16 1v41l-16-1z" fill="#00b4b4"/><path d="M31 3h3v41h-3z" fill="#00e4e8"/><circle cx="35" cy="20" r="10.500" fill="#00c4c8" fill-opacity=".55"/><circle cx="13" cy="23" r="8" fill="#30c4c4"/><path d="M10 17l15-1q5 5 0 12l-15 2z" fill="#00e6e6"/></g>
          <g id="spring" fill="none" stroke="#00cccc" stroke-width="1.200"><path d="M-3-12h7M1-11l-1 3 3 3-3 3v2M-2 0h5"/></g>
        </defs>
        <path d="M425 146l21-4 27 3 169-22 1 415-171 21-47-3z" fill="#5a5a5a"/>
        <path d="M436 148h36v408h-36z" fill="#207878" fill-opacity=".3"/><path d="M475 148h8v408h-8z" fill="#207878" fill-opacity=".45"/>
        <path d="M403 558l22-2 40-4 177-17 44 6-80 12-91 11-52-2z" fill="#168082"/>
        <g id="mesh" fill="none" stroke="#0e8686"></g>
        <path d="M425 146v274" stroke="#b4b4b4"/><path d="M425 420v136" stroke="#00b8b8" stroke-width="1.500"/>
        <path d="M642.500 124v414" stroke="#10b8b8" stroke-width="1.500"/>
        <path d="M446 143v415" stroke="#bcd8c4" stroke-width="3"/><path d="M446 146v412" stroke="#6c9c94" stroke-dasharray="1 2"/>
        <path d="M473.500 146v412" stroke="#cfe4cc" stroke-width="3.500"/>
        <path d="M425 146l21-4 27 3" fill="none" stroke="#d0e4c4" stroke-width="3"/>
        <path d="M474 144l168-21" stroke="#d8d8d8" stroke-width="1.300"/>
        <path d="M473 558l169-20" stroke="#c8dcb4" stroke-width="1.800"/>
        <path d="M403 558l42 4 70 2 167-22" fill="none" stroke="#dce4e4" stroke-width="1.200"/>
        <path d="M642 538l48 4" stroke="#dce4e4"/><path d="M480 551l118-15 44 1" fill="none" stroke="#8cd4d4" stroke-width="1.500" stroke-dasharray="2 2"/>
        <use href="#blockL" x="381" y="121"/><use href="#knob" x="380" y="143"/>
        <path d="M381 402l32-3 2 20-2 80-32 1z" fill="#00b4b4"/><path d="M389 400l18-1v100l-18 1z" fill="#00ebeb"/><path d="M407 399l3 1v98l-3 1z" fill="#00a0a0"/><path d="M381 461l33-4" stroke="#00a4a4"/>
        <use href="#knob" x="380" y="419"/><use href="#knob" x="380" y="440"/><use href="#knob" x="380" y="477"/>
        <use href="#blockL" x="381" y="509"/><use href="#knob" x="380" y="531"/>
        <use href="#blockR" x="601" y="156"/><use href="#blockR" x="601" y="260"/><use href="#blockR" x="601" y="363"/><use href="#blockR" x="601" y="467"/>
        <path d="M618 131v404" stroke="#128484"/>
        <g id="springs"></g>
        <g fill="#e81818"><circle cx="425" cy="145" r="1.300"/><circle cx="473" cy="145" r="1.500"/><circle cx="642" cy="123" r="1.300"/><circle cx="425" cy="412" r="1.200"/><circle cx="425" cy="453" r="1.200"/><circle cx="404" cy="558" r="1.300"/><circle cx="425" cy="560" r="1.300"/><circle cx="435" cy="561" r="1.300"/><circle cx="448" cy="559" r="1.300"/><circle cx="514" cy="564" r="1.300"/><circle cx="691" cy="542" r="1.200" fill="#e89020"/></g>
        <g fill="#002c00" stroke="#00b800" stroke-width="1.200"><path d="M682 127h6v414h-6z"/><path d="M682 168h6M682 209h6M682 251h6M682 292h6M682 334h6M682 375h6M682 417h6M682 458h6M682 479h6M682 500h6M682 511h6"/></g>
        <path d="M682 521h6M682 531h6M682 534h6M682 537h6M685 531v11M687 530l5 12M688 540l39 3M688 542l39 3" stroke="#00e400" stroke-width="1.200"/>
        <g stroke="#20d840" fill="#20a830" fill-opacity=".35"><path d="M464 416h7v147h-7zM464 416l34 2-25 18"/><path d="M464 436h7M464 456h7M464 474h7M464 492h7M464 510h7M464 527h7M464 546h7"/></g>
        <path d="M464 416l5-2v4zM464 562h16M475 548l5 15" stroke="#00e400" fill="#00e400" stroke-width="1.200"/>
        <path d="M473 149l82 6" stroke="#00e800" stroke-width="1.500"/><path d="M471 149l6-2v4z" fill="#00ff00"/>
        <g class="values"><text x="518" y="147">98.64</text><text x="691" y="170">66.21</text><text x="502" y="420">1259.73</text><text x="474" y="438">59.32</text><text x="474" y="458">54.21</text><text x="484" y="566">353.44</text></g>
        <path d="M453 229L353.500 345 337 318" fill="none" stroke="#22b14c" stroke-width="6" stroke-linecap="round" stroke-linejoin="round"/>
        <path d="M350 554l10-1" stroke="#f01010" stroke-width="1.500"/><path d="M358 551l7 1-7 2z" fill="#f01010"/>
        <path d="M350 554l14 1" stroke="#00e400" stroke-width="1.500"/><path d="M363 553l8 2-8 2z" fill="#00e400"/>
        <path d="M350 554v21" stroke="#00b8c0" stroke-width="1.500"/><path d="M348 572h4l-2 8z" fill="#00b8c0"/>
        <g class="axes"><text x="368" y="554" fill="#b01010">X</text><text x="374" y="558" fill="#00b800">Y</text><text x="348" y="588" fill="#008c94">Z</text></g>
      </svg>
      <p class="caption top">Podporové reakce [kN], [kN/m]<br>KZ1 : 1.35*ZS1 + 1.5*ZS2 + 1.35*ZS3 + 1.5*ZS4</p>
      <p class="caption bottom">Max P-X': 0.00, Min P-X': 0.00 kN<br>Max P-Y': 98.64, Min P-Y': 98.64 kN<br>Max P-Z': 0.00, Min P-Z': 0.00 kN<br>Max p-y': 3455.12, Min p-y': 59.32 kN/m<br>Max p-z': 0.00, Min p-z': 0.00 kN/m</p>
    </section>
  </main>
  <footer class="status">Hotovo</footer>
</div>
<script src="mesh.js"></script>
</body>
</html>
```
FILE: styles.css
```css
* { box-sizing: border-box; }
body { margin: 0; background: #fff; font: 9px/14px "Open Sans", "Noto Sans", sans-serif; color: #1c1c1c; }
h1, h2, p, ul { margin: 0; padding: 0; font-weight: 400; list-style: none; }
a { color: inherit; text-decoration: none; }
button { border: 0; padding: 0; background: none; color: inherit; font: inherit; }
.defs { position: absolute; width: 0; height: 0; }
.app { display: flex; flex-direction: column; height: 100vh; margin: 0 33px 0 32px; overflow: hidden; background: #cfd4de; }

.titlebar { display: flex; align-items: center; gap: 4px; height: 19px; padding-left: 1px; background: #fff; }
.titlebar h1 { font-size: 9px; color: #111; }
.title-icon { width: 12px; height: 13px; }

.menubar { display: flex; align-items: center; gap: 11px; height: 19px; padding-left: 6px; color: #4c5464; font-size: 8px; white-space: nowrap; }
.menu-icon { width: 13px; height: 12px; margin-right: -4px; }

.toolbar { display: flex; align-items: center; flex: none; height: 20px; padding-left: 6px; overflow: hidden; background: linear-gradient(#f3f6fb, #dbe1ec 80%, #c8cfdc); position: relative; }
.toolbar::before, .grip { content: ""; flex: none; width: 2px; height: 12px; background: repeating-linear-gradient(#9aa4b6 0 1px, transparent 1px 3px); }
.toolbar::before { position: absolute; left: 2px; top: 4px; }
.grip { margin: 0 2px; }
.toolbar button { flex: none; display: grid; place-items: center; width: 18px; height: 18px; }
.toolbar button svg { width: 14px; height: 14px; }
.toolbar .on { background: linear-gradient(#fbd9a0, #fbb651 50%, #fde08e); border: 1px solid #c8a05c; }
.toolbar .dim { opacity: .5; }
.toolbar .dd { width: 10px; }
.dd::before { content: ""; border: 2px solid transparent; border-top: 3px solid #707888; }
.sep { flex: none; width: 1px; height: 13px; margin: 0 2px 0 1px; background: #b4bccb; }
.combo { appearance: none; flex: none; width: 137px; height: 15px; margin: 0 1px 0 3px; padding: 0 12px 0 2px; border: 0; border-radius: 0; font: inherit; color: #111; background: linear-gradient(#6c7484, #6c7484) right 4px center / 3px 2px no-repeat, linear-gradient(#e4e8f0, #e4e8f0) right / 10px 100% no-repeat, #fff; }

.work { display: flex; flex: 1; min-height: 0; gap: 2px; border-top: 1px solid #a8aebc; }
.navigator { display: flex; flex-direction: column; flex: 0 0 281px; min-width: 0; }
.nav-head { display: flex; align-items: center; gap: 4px; height: 18px; padding: 0 5px 0 3px; background: #e9eef8; color: #4a5060; }
.nav-head h2 { flex: 1; font-size: 9px; }
.nav-head svg { display: block; width: 8px; height: 8px; }
.tree-wrap { display: flex; flex: 1; min-height: 0; margin-right: 3px; background: #fcfcf4; border: 1px solid #b4bac8; }
.tree { flex: 1; overflow: hidden; padding: 1px 0 0 1px; }
.tree ul ul { padding-left: 14px; }
.tree li { position: relative; }
.tree li::before { content: ""; position: absolute; left: 7px; top: 0; bottom: 0; border-left: 1px solid #c8c8c8; }
.tree li:last-child::before { bottom: auto; height: 7px; }
.tree > ul > li:last-child::before { height: 14px; }
.row { position: relative; display: flex; align-items: center; height: 14px; white-space: nowrap; }
.row::before { content: ""; position: absolute; left: 8px; top: 7px; width: 9px; border-top: 1px solid #c8c8c8; }
.slot { position: relative; width: 7px; height: 7px; margin: 0 6px 0 4px; }
.row .plus, .row .minus { border: 1px solid #a4acba; }
.minus { background: linear-gradient(#3858a8, #3858a8) center / 3px 1px no-repeat, #fcfcf4; }
.plus { background: linear-gradient(#3858a8, #3858a8) center / 3px 1px no-repeat, linear-gradient(#3858a8, #3858a8) center / 1px 3px no-repeat, #fcfcf4; }
.row input { appearance: none; position: relative; width: 9px; height: 9px; margin: 0 1px 0 0; border: 1px solid #7c828c; background: #f1f3f5; }
.row input:checked::after { content: ""; position: absolute; left: 2px; top: 0; width: 3px; height: 5px; border: solid #111; border-width: 0 1px 1px 0; transform: rotate(40deg); }
.row .mixed { background: #8c9096; box-shadow: inset 0 0 0 1px #dfe1e4; }
.row svg { width: 10px; height: 10px; margin-right: 2px; }
.row label { padding: 0 1px; line-height: 13px; }
.strong { font-weight: 700; }
.selected { background: #0078d7; color: #fff; }
.marked::after { content: ""; position: absolute; left: -2px; top: -2px; width: 121px; height: 17px; border: 1px solid #ec1c24; }
.scroll { display: flex; flex-direction: column; width: 13px; background: #f0f0f0; }
.scroll svg { height: 13px; }
.track { flex: 1; }
.thumb { height: 29%; background: #cdcdcd; position: relative; top: 35%; }

.tabs { display: flex; align-items: center; gap: 4px; height: 18px; padding-left: 1px; color: #4c5464; font-size: 8px; }
.tabs a { display: flex; align-items: center; gap: 1px; height: 16px; padding: 0 2px; }
.tabs svg { width: 10px; height: 10px; }
.tabs .current { background: #eef2f9; border: solid #fff; border-width: 0 1px 1px 0; }

.view { position: relative; flex: 1; min-width: 0; background: #000; overflow: hidden; }
.scene { display: block; width: 100%; height: 100%; }
.values, .axes { font: 6px "Liberation Sans", sans-serif; fill: #00ff00; }
.axes { font-size: 7px; }
.caption { position: absolute; left: 2px; font: 7px/9px "Liberation Sans", sans-serif; color: #e8e8e8; white-space: nowrap; }
.top { top: 3px; }
.bottom { bottom: 1px; }

.status { flex: none; height: 20px; padding: 4px 2px 0; color: #333a46; background: linear-gradient(#f4f6fa 0, #c8ccd4 20%, #a4a9b2 45%, #bcc0c6 100%); border-bottom: 1px solid #4c4f58; }
```
FILE: mesh.js
```js
const NS = "http://www.w3.org/2000/svg";
const mesh = document.getElementById("mesh");
const springs = document.getElementById("springs");

// Repeatable pseudo-random offsets keep the mesh identical on every load.
let seed = 11;
const rnd = () => (seed = (seed * 16807) % 2147483647) / 2147483647 - 0.5;

function path(d, width, opacity, dash) {
  const p = document.createElementNS(NS, "path");
  p.setAttribute("d", d);
  p.setAttribute("stroke-width", width);
  p.setAttribute("stroke-opacity", opacity);
  if (dash) p.setAttribute("stroke-dasharray", dash);
  mesh.appendChild(p);
}

// Quadrilateral net over given columns with jittered nodes and stray diagonals.
function net(cols, y0, y1, step, jitter, slope, diagonals) {
  const rows = [];
  for (let y = y0; y <= y1; y += step) {
    rows.push(cols.map((x, i) => {
      const edge = i === 0 || i === cols.length - 1;
      return [x + (edge ? 0 : rnd() * jitter), y + rnd() * jitter - (x - cols[0]) * slope];
    }));
  }
  let d = "";
  rows.forEach((row, r) => row.forEach((p, c) => {
    const to = q => { d += `M${p[0].toFixed(1)} ${p[1].toFixed(1)}L${q[0].toFixed(1)} ${q[1].toFixed(1)}`; };
    if (c + 1 < row.length) to(row[c + 1]);
    if (r + 1 < rows.length) {
      to(rows[r + 1][c]);
      if (c + 1 < row.length && rnd() + 0.5 < diagonals) to(rows[r + 1][c + 1]);
    }
  }));
  return d;
}

path(net([425, 431, 436, 440], 150, 552, 14, 5, 0.05, 0.5), 0.8, 1);
path(net([436, 439, 441, 443, 445], 148, 554, 4, 1.5, 0, 0.2), 0.8, 0.8);
path(net([447, 450, 453, 457, 461, 465, 468, 470, 472], 150, 554, 5, 1, 0, 0.1), 0.8, 0.85);
path(net([475, 477, 479, 482], 150, 554, 4, 1.5, 0, 0.3), 0.8, 0.8);
path(net([482, 488, 495], 152, 550, 13, 5, 0.1, 0.5), 0.8, 1);
path(net([495, 507, 521], 160, 475, 36, 12, 0.12, 0.4), 0.9, 1, "4 1");
path(net([484, 495, 507, 520, 532, 545, 557, 570, 582, 594, 606, 618, 630, 642], 494, 528, 15, 7, 0.04, 0.5), 0.9, 1);
path(net([484, 491, 498, 505, 512, 519, 526, 533, 540, 547, 554, 561, 568, 575, 582, 589, 596, 603, 610, 617, 624, 631, 642], 533, 556, 6, 3, 0.12, 0.4), 0.8, 0.9);

path("M545 136V545M570 133V542M594 130V540M618 127V538", 1, 1);
path("M521 138Q517 200 521 220Q524 260 520 300Q524 350 521 390Q525 430 520 470", 1, 0.9);
path("M508 181L520 180 620 167M508 223L520 221 642 206M507 263L545 259 642 248M506 310L520 307 642 290M506 349L520 347 642 331M506 391L520 388 642 374M506 434L520 430 545 427 570 426 594 421 618 419 642 414M495 480L520 474 545 466 570 473 594 461 618 467 642 456", 1, 1, "4 1");
path("M520 474l12 16h25l13-17 13 15 25-4M532 490v30M557 490v25M618 467l-12 17v30M618 467l13 20v30M545 466V490M508 500l24-10M570 473v40M583 488v30", 1, 1);

// x and foot of each line-support spring under the base plate
const feet = [[418, 571], [425, 573], [435, 569], [443, 572], [450, 567], [463, 573], [484, 574], [505, 576],
  [523, 575], [539, 573], [555, 571], [571, 569], [588, 567], [604, 565], [620, 563], [637, 561],
  [652, 559], [660, 554], [669, 557], [681, 555]];
feet.forEach(([x, y]) => {
  const u = document.createElementNS(NS, "use");
  u.setAttribute("href", "#spring");
  u.setAttribute("x", x);
  u.setAttribute("y", y);
  springs.appendChild(u);
});
document.querySelectorAll(".mixed").forEach(box => { box.indeterminate = true; });
```
